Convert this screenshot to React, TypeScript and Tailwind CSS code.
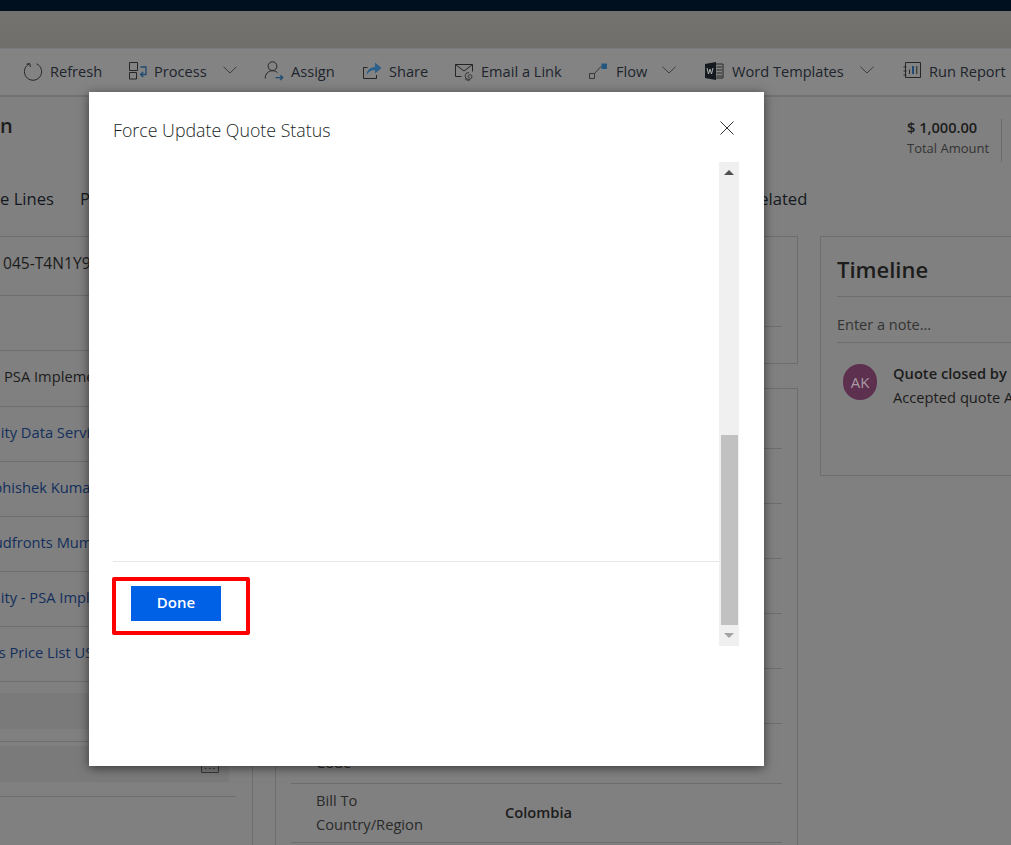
import { ReactNode } from 'react';

const ICON = 'h-[20px] w-[20px] shrink-0 overflow-visible';
const LINE = '#262626';
const ACCENT = '#1d4b73';

function ToolItem({
  icon,
  label,
  className,
  labelClass,
  chevronClass,
}: {
  icon: ReactNode;
  label: string;
  className: string;
  labelClass: string;
  chevronClass?: string;
}) {
  return (
    <div className={`flex shrink-0 items-center ${className}`}>
      {icon}
      <span className={`whitespace-nowrap text-[14.6px] text-[#20242c] ${labelClass}`}>{label}</span>
      {chevronClass && (
        <svg viewBox="0 0 14 8" className={`-mt-[3px] h-[8px] w-[14px] shrink-0 ${chevronClass}`} fill="none" stroke="#3d3d3d">
          <path d="M.5.8 7 7 13.5.8" />
        </svg>
      )}
    </div>
  );
}

const leftRows = [
  { h: 'h-[59px]', text: '045-T4N1Y9', cls: 'ml-[3px] text-[15.6px] text-[#1c1c1c]' },
  { h: 'h-[55px]', text: '', cls: '' },
  { h: 'h-[56px]', text: 'PSA Implementation', cls: 'ml-[4px] text-[#1c1c1c]' },
  { h: 'h-[55px]', text: 'Unity Data Services', cls: '-ml-[19px] text-[#132f5c]' },
  { h: 'h-[55px]', text: 'Abhishek Kumar', cls: '-ml-[16px] text-[#132f5c]' },
  { h: 'h-[55px]', text: 'Cloudfronts Mumbai', cls: '-ml-[28px] text-[#132f5c]' },
  { h: 'h-[55px]', text: 'Unity - PSA Implementation', cls: '-ml-[19px] text-[#132f5c]' },
  { h: 'h-[55px]', text: 'Services Price List USD', cls: '-ml-[50px] text-[#132f5c]' },
];

const rowLines = ['h-[60px]', 'h-[55px]', 'h-[55px]', 'h-[55px]', 'h-[55px]', 'h-[55px]'];

export default function App() {
  return (
    <div
      className="relative h-[845px] w-[1011px] overflow-hidden bg-[#808080] text-[#1c1c1c]"
      style={{ fontFamily: '"Open Sans", "Noto Sans", sans-serif' }}
    >
      <div className="h-[11px] bg-[#00101f]" />
      <div className="h-[37px] bg-gradient-to-b from-[#75736f] to-[#706f6c]" />

      <div className="flex h-[47px] items-center border-t border-[#787b80] bg-[#838383] pb-[1px] pl-[23px]">
        <ToolItem
          className="w-[105px]"
          labelClass="ml-[7px]"
          label="Refresh"
          icon={
            <svg viewBox="0 0 20 20" className={ICON} fill="none" stroke={LINE}>
              <path d="M6.5 2.8a8.6 8.6 0 1 0 7 0" />
              <path d="M3.5 3.2 6.8 2.6l.6 3.4" />
            </svg>
          }
        />
        <ToolItem
          className="w-[136px]"
          labelClass="ml-[6px]"
          label="Process"
          chevronClass="ml-[16px]"
          icon={
            <svg viewBox="0 0 20 20" className={ICON} fill="none" stroke={LINE}>
              <path d="M1.5 1.5h8v8h-8zM1.5 11.5h7v6.5h-7z" />
              <path d="M12.5 6H18v7.5h-5" stroke={ACCENT} strokeWidth="1.3" />
              <path d="m15.2 11-2.6 2.5 2.6 2.5" stroke={ACCENT} strokeWidth="1.3" />
            </svg>
          }
        />
        <ToolItem
          className="w-[98px]"
          labelClass="ml-[7px]"
          label="Assign"
          icon={
            <svg viewBox="0 0 20 20" className={ICON} fill="none" stroke={LINE}>
              <circle cx="8.5" cy="5.2" r="4.4" />
              <path d="M1.2 17.5c0-4.6 3-7.8 7.3-7.8 2.2 0 3.9.8 5 2" />
              <path d="M11.5 16.6h7M16.2 14.2l2.5 2.4-2.5 2.4" stroke={ACCENT} strokeWidth="1.3" />
            </svg>
          }
        />
        <ToolItem
          className="w-[92px]"
          labelClass="ml-[7px]"
          label="Share"
          icon={
            <svg viewBox="0 0 20 20" className={ICON} fill="none">
              <path d="M5.5 6.5h-4v11h13V14" stroke={LINE} />
              <path d="M4.5 14c.3-4.8 3.6-7.6 8.5-8V1.5L19.5 7 13 12.5V9C9.5 9 6.5 10.8 4.5 14z" fill="#2b5f8c" />
            </svg>
          }
        />
        <ToolItem
          className="w-[134px]"
          labelClass="ml-[7px]"
          label="Email a Link"
          icon={
            <svg viewBox="0 0 20 20" className={ICON} fill="none" stroke={LINE}>
              <path d="M7.5 15.5h-6v-12h17v7" />
              <path d="m1.5 3.5 8.5 6.5 8.5-6.5" />
              <path d="M15 11.5a3.5 3.5 0 1 0 3 4.5 2 2 0 0 0-4-.5 1.2 1.2 0 0 0 2 .8M11 17.5a4 4 0 0 0 5 1.5" stroke="#383838" />
            </svg>
          }
        />
        <ToolItem
          className="w-[116px]"
          labelClass="ml-[8px]"
          label="Flow"
          chevronClass="ml-[15px]"
          icon={
            <svg viewBox="0 0 20 20" className={ICON} fill="none" stroke="#363636">
              <path d="M1.5 12.5h5v5h-5zM6.5 12.5 13 5.5H14" />
              <path d="M13.5 2.5h5.5V8h-5.5z" fill="#24567f" stroke="none" />
            </svg>
          }
        />
        <ToolItem
          className="w-[198px]"
          labelClass="ml-[8px]"
          label="Word Templates"
          chevronClass="ml-[16px]"
          icon={
            <svg viewBox="0 0 20 20" className={ICON}>
              <path d="M11 3h8v14h-8z" fill="none" stroke={LINE} />
              <path d="M12.5 6H18M12.5 9H18M12.5 12H18M12.5 15H18" stroke={LINE} />
              <path d="M1 3 12 1v18L1 17z" fill="#141a20" />
              <path d="m3 7 1.5 6 1.5-5 1.5 5L9 7" fill="none" stroke="#b0b0b0" />
            </svg>
          }
        />
        <ToolItem
          className="w-[110px]"
          labelClass="ml-[7px]"
          label="Run Report"
          icon={
            <svg viewBox="0 0 20 20" className={ICON} fill="none" stroke={LINE}>
              <path d="M3.5 1.5h15v15h-15zM1.5 6h3M1.5 10h3M1.5 14h3" />
              <path d="M7.5 8.5V13" />
              <path d="M11 5v8" stroke={ACCENT} strokeWidth="2" />
              <path d="M14.8 5v8" />
            </svg>
          }
        />
      </div>

      <div className="h-[2px] border-y border-[#727272]" />

      <div className="flex h-[139px] flex-col">
        <div className="flex h-[76px] items-start justify-between">
          <div className="pt-[14px] text-[20px] font-semibold">n</div>
          <div className="flex pt-[20px]">
            <div className="w-[94px]">
              <div className="text-[14.6px] leading-[20px] font-semibold">$ 1,000.00</div>
              <div className="text-[13px] leading-[22px] text-[#333333]">Total Amount</div>
            </div>
            <div className="mt-[2px] h-[43px] w-[1px] border-r border-[#6c6c6c]" />
            <div className="w-[9px]" />
          </div>
        </div>
        <div className="flex h-[63px] items-start pt-[14px] text-[16.6px] whitespace-nowrap text-[#141820]">
          <span>e Lines</span>
          <span className="ml-[26px]">Pricing</span>
          <span className="ml-[627px]">elated</span>
        </div>
      </div>

      <div className="flex items-start text-[14.7px]">
        <div className="h-[615px] w-[253px] shrink-0 border-r border-[#6d6d6d]">
          <div className="mr-[16px] border-t border-[#6d6d6d]">
            {leftRows.map((row, i) => (
              <div key={i} className={`flex items-center border-b border-[#6d6d6d] font-medium whitespace-nowrap ${row.h}`}>
                <span className={`-mt-[4px] ${row.cls}`}>{row.text}</span>
              </div>
            ))}
            <div className="h-[11px]" />
            <div className="mr-[7px] h-[36px] bg-[#7a7a7a]" />
            <div className="h-[13px] border-b border-[#6d6d6d]" />
            <div className="mt-[4px] mr-[7px] flex h-[36px] items-end justify-end bg-[#7a7a7a] pr-[10px] pb-[9px]">
              <svg viewBox="0 0 18 13" className="h-[13px] w-[18px]" fill="none" stroke="#3a3a3a">
                <path d="M.5.5h17v12H.5zM4 8.5h1.5M8 8.5h1.5M12 8.5h1.5" />
              </svg>
            </div>
            <div className="h-[15px] border-b border-[#6d6d6d]" />
          </div>
        </div>

        <div className="ml-[22px] flex w-[523px] shrink-0 flex-col gap-[24px]">
          <div className="h-[128px] border border-[#6d6d6d] px-[15px] pt-[89px]">
            <div className="border-t border-[#6d6d6d]" />
          </div>
          <div className="h-[500px] border border-[#6d6d6d] px-[15px]">
            {rowLines.map((h, i) => (
              <div key={i} className={`border-b border-[#6d6d6d] ${h}`} />
            ))}
            <div className="flex h-[60px] items-center border-b border-[#6d6d6d]">
              <div className="-mt-[7px] w-[214px] pl-[25px] leading-[24px] text-[#2a2a2a]">
                <div>Postal</div>
                <div>Code</div>
              </div>
            </div>
            <div className="flex h-[59px] items-center border-b border-[#6d6d6d]">
              <div className="-mt-[3px] w-[214px] pl-[25px] leading-[24px] text-[#2a2a2a]">
                <div>Bill To</div>
                <div>Country/Region</div>
              </div>
              <div className="-mt-[1px] font-semibold">Colombia</div>
            </div>
          </div>
        </div>

        <div className="ml-[22px] h-[240px] w-[260px] shrink-0 border border-[#6d6d6d] pl-[16px]">
          <div className="flex h-[60px] items-center border-b border-[#6d6d6d] pt-[6px] text-[22px] font-semibold whitespace-nowrap text-[#1c1c1c]">
            Timeline
          </div>
          <div className="flex h-[46px] items-center border-b border-[#6d6d6d] pt-[10px] text-[14.5px] text-[#333333]">Enter a note...</div>
          <div className="flex pt-[21px] pl-[6px] whitespace-nowrap">
            <div className="flex h-[36px] w-[34px] shrink-0 items-center justify-center rounded-full bg-[#5e304f] text-[15px] text-[#a99aa4]">
              AK
            </div>
            <div className="-mt-[3px] ml-[16px] leading-[24px]">
              <div className="font-semibold">Quote closed by</div>
              <div>Accepted quote A</div>
            </div>
          </div>
        </div>
      </div>

      <div className="absolute top-[92px] left-[89px] flex h-[674px] w-[675px] flex-col bg-white shadow-[0_2px_10px_rgba(0,0,0,0.55)]">
        <div className="flex h-[70px] items-start justify-between pt-[25px] pr-[30px] pl-[24px]">
          <h1 className="text-[17.8px] leading-[26px] font-light text-[#201f1e]">Force Update Quote Status</h1>
          <svg viewBox="0 0 14 14" className="mt-[4px] h-[14px] w-[14px]" fill="none" stroke="#333333">
            <path d="m.5.5 13 13M13.5.5l-13 13" />
          </svg>
        </div>
        <div className="flex h-[484px] pl-[24px]">
          <div className="flex w-[606px] flex-col justify-end">
            <div className="h-[85px] border-t border-[#e6e6e6] pt-[15px]">
              <div className="-ml-[1px] h-[58px] w-[138px] rounded-[2px] border-[4px] border-[#ff0000] pt-[5px] pl-[15px]">
                <button className="block h-[35px] w-[90px] bg-[#0060e6] pb-[2px] text-[15px] font-semibold text-white">Done</button>
              </div>
            </div>
          </div>
          <div className="flex w-[20px] flex-col items-center bg-[#f0f0f0]">
            <div className="flex h-[20px] items-center">
              <div className="h-0 w-0 border-x-[5px] border-b-[5px] border-x-transparent border-b-[#505050]" />
            </div>
            <div className="mt-[253px] ml-[1px] h-[190px] w-[17px] bg-[#c1c1c1]" />
            <div className="flex h-[21px] items-center">
              <div className="h-0 w-0 border-x-[5px] border-t-[5px] border-x-transparent border-t-[#a3a3a3]" />
            </div>
          </div>
        </div>
      </div>
    </div>
  );
}
